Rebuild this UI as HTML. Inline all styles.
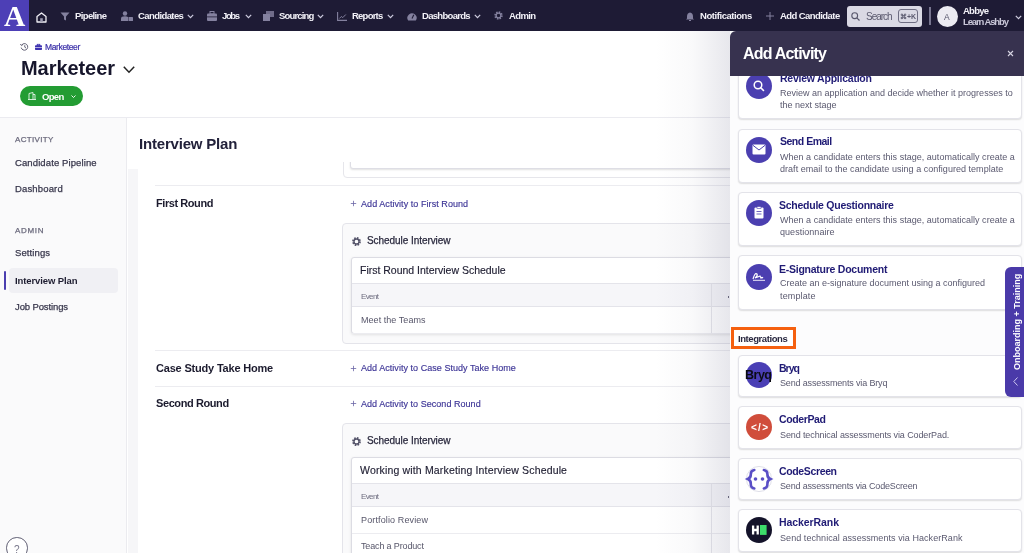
<!DOCTYPE html>
<html><head><meta charset="utf-8">
<style>
*{box-sizing:border-box;margin:0;padding:0}
html,body{width:1024px;height:553px;overflow:hidden;background:#fff;font-family:"Liberation Sans",sans-serif;color:#222}
.t{position:absolute;white-space:nowrap;line-height:1;will-change:transform}
.b{position:absolute}
svg{position:absolute;overflow:visible}
</style></head><body>
<div class="b" style="left:0;top:0;width:1024px;height:31px;background:#1e1b35"></div><div class="b" style="left:0;top:0;width:29px;height:31px;background:#4d3fb6"></div><div class="t" style="left:3.5px;top:1.83px;font-size:29.5px;color:#fff;font-weight:bold;font-family:'Liberation Serif',serif;">A</div>
<svg style="left:36px;top:12px" width="11" height="11" viewBox="0 0 11 11"><path d="M1 4.6 L5.5 1 L10 4.6 V10 H1 Z" fill="none" stroke="#f0eff5" stroke-width="1.3" stroke-linejoin="round"/><rect x="4.2" y="6.2" width="2.6" height="3.6" fill="#9c9ab0"/></svg><svg style="left:60px;top:12px" width="10" height="9" viewBox="0 0 10 9"><path d="M0.5 0.5 H9.5 L6 4.5 V8.5 L4 7.5 V4.5 Z" fill="#84819f"/></svg><div class="t" style="left:75.0px;top:10.96px;font-size:9.5px;color:#f3f2f8;font-weight:bold;letter-spacing:-0.63px;">Pipeline</div>
<svg style="left:121px;top:11px" width="12" height="10" viewBox="0 0 12 10"><circle cx="4" cy="2.5" r="2.2" fill="#84819f"/><path d="M0 10 V7.5 Q0 5.2 4 5.2 Q6 5.2 7 6 V10 Z" fill="#84819f"/><rect x="7.5" y="6" width="4.5" height="4" rx="0.6" fill="#84819f"/></svg><div class="t" style="left:137.7px;top:10.96px;font-size:9.5px;color:#f3f2f8;font-weight:bold;letter-spacing:-0.59px;">Candidates</div>
<svg style="left:187px;top:14px" width="7" height="5" viewBox="0 0 7 5"><path d="M0.8 0.8 L3.5 3.6 L6.2 0.8" fill="none" stroke="#cfcde0" stroke-width="1.2"/></svg><svg style="left:207px;top:11px" width="10" height="10" viewBox="0 0 10 10"><rect x="0" y="2.5" width="10" height="7.5" rx="1" fill="#84819f"/><rect x="3" y="0.5" width="4" height="2.5" fill="none" stroke="#84819f" stroke-width="1"/><rect x="0" y="5.5" width="10" height="0.8" fill="#1e1b35"/></svg><div class="t" style="left:221.5px;top:10.96px;font-size:9.5px;color:#f3f2f8;font-weight:bold;letter-spacing:-1.36px;">Jobs</div>
<svg style="left:245px;top:14px" width="7" height="5" viewBox="0 0 7 5"><path d="M0.8 0.8 L3.5 3.6 L6.2 0.8" fill="none" stroke="#cfcde0" stroke-width="1.2"/></svg><svg style="left:263px;top:11px" width="11" height="10" viewBox="0 0 11 10"><rect x="0" y="3" width="7" height="7" fill="#84819f"/><rect x="3" y="0" width="8" height="6" fill="#84819f" opacity=".8"/></svg><div class="t" style="left:279.0px;top:10.96px;font-size:9.5px;color:#f3f2f8;font-weight:bold;letter-spacing:-0.85px;">Sourcing</div>
<svg style="left:317px;top:14px" width="7" height="5" viewBox="0 0 7 5"><path d="M0.8 0.8 L3.5 3.6 L6.2 0.8" fill="none" stroke="#cfcde0" stroke-width="1.2"/></svg><svg style="left:336.5px;top:12px" width="10" height="9" viewBox="0 0 10 9"><path d="M0.6 0 V8.4 H10" fill="none" stroke="#84819f" stroke-width="1.1"/><path d="M2.3 6.5 L4.3 4.5 L5.8 5.6 L8.8 2.5" fill="none" stroke="#84819f" stroke-width="1"/></svg><div class="t" style="left:351.7px;top:10.96px;font-size:9.5px;color:#f3f2f8;font-weight:bold;letter-spacing:-0.77px;">Reports</div>
<svg style="left:386.5px;top:14px" width="7" height="5" viewBox="0 0 7 5"><path d="M0.8 0.8 L3.5 3.6 L6.2 0.8" fill="none" stroke="#cfcde0" stroke-width="1.2"/></svg><svg style="left:407px;top:12px" width="10" height="9" viewBox="0 0 10 9"><path d="M1.2 8.6 A4.6 4.6 0 1 1 8.8 8.6 Z" fill="#84819f"/><path d="M5 6.5 L6.8 2.8" stroke="#1e1b35" stroke-width="1.1"/></svg><div class="t" style="left:421.8px;top:10.96px;font-size:9.5px;color:#f3f2f8;font-weight:bold;letter-spacing:-0.70px;">Dashboards</div>
<svg style="left:474px;top:14px" width="7" height="5" viewBox="0 0 7 5"><path d="M0.8 0.8 L3.5 3.6 L6.2 0.8" fill="none" stroke="#cfcde0" stroke-width="1.2"/></svg><svg style="left:494px;top:11px" width="9" height="9" viewBox="0 0 10 10"><circle cx="5" cy="5" r="3.6" fill="none" stroke="#84819f" stroke-width="2.2" stroke-dasharray="1.6 1.2"/><circle cx="5" cy="5" r="2.6" fill="none" stroke="#84819f" stroke-width="1.4"/></svg><div class="t" style="left:508.5px;top:10.96px;font-size:9.5px;color:#f3f2f8;font-weight:bold;letter-spacing:-0.64px;">Admin</div>
<svg style="left:686px;top:12px" width="8" height="9" viewBox="0 0 8 9"><path d="M4 0.5 Q7 1 7 4.5 V6.5 L8 7.5 H0 L1 6.5 V4.5 Q1 1 4 0.5 Z" fill="#84819f"/><rect x="3" y="8" width="2" height="1" fill="#84819f"/></svg><div class="t" style="left:699.7px;top:10.96px;font-size:9.5px;color:#f3f2f8;font-weight:bold;letter-spacing:-0.44px;">Notifications</div>
<svg style="left:766px;top:12px" width="8" height="8" viewBox="0 0 8 8"><path d="M4 0 V8 M0 4 H8" stroke="#84819f" stroke-width="1"/></svg><div class="t" style="left:779.8px;top:10.96px;font-size:9.5px;color:#f3f2f8;font-weight:bold;letter-spacing:-0.57px;">Add Candidate</div>
<div class="b" style="left:847px;top:6px;width:75px;height:21px;background:#dad9e4;border-radius:3px"></div><svg style="left:851px;top:12px" width="9" height="9" viewBox="0 0 9 9"><circle cx="3.7" cy="3.7" r="2.9" fill="none" stroke="#57566b" stroke-width="1.1"/><path d="M5.8 5.8 L8.5 8.5" stroke="#57566b" stroke-width="1.2"/></svg><div class="t" style="left:865.5px;top:11.54px;font-size:10px;color:#5a596e;letter-spacing:-1.04px;">Search</div>
<div class="b" style="left:898px;top:9px;width:20px;height:14px;border:1px solid #6e6d82;border-radius:3px"></div><div class="t" style="left:899.8px;top:13.37px;font-size:7px;color:#5a596e;font-weight:bold;letter-spacing:-0.10px;">⌘+K</div>
<div class="b" style="left:929px;top:7px;width:2px;height:18px;background:#77758f"></div><div class="b" style="left:937px;top:6px;width:21px;height:21px;border-radius:50%;background:#ecebf2"></div><div class="t" style="left:944.0px;top:12.80px;font-size:8.5px;color:#55546a;">A</div>
<div class="t" style="left:963.0px;top:6.36px;font-size:9.5px;color:#f3f2f8;font-weight:bold;letter-spacing:-0.76px;">Abbye</div>
<div class="t" style="left:963.0px;top:17.16px;font-size:9.5px;color:#c9c7d8;font-weight:bold;letter-spacing:-1.12px;">Learn Ashby</div>
<svg style="left:1015px;top:15px" width="7" height="5" viewBox="0 0 7 5"><path d="M0.8 0.8 L3.5 3.6 L6.2 0.8" fill="none" stroke="#d0cee0" stroke-width="1.2"/></svg><svg style="left:20px;top:43px" width="9" height="8" viewBox="0 0 9 8"><path d="M1.6 2.2 A3.3 3.3 0 1 1 1.2 4.6" fill="none" stroke="#56556b" stroke-width="0.9"/><path d="M0.3 1 L1.6 2.6 L3 1.4" fill="none" stroke="#56556b" stroke-width="0.9"/><path d="M4.8 2.2 V4.2 L6 5" fill="none" stroke="#56556b" stroke-width="0.9"/></svg><svg style="left:35px;top:43.5px" width="7" height="6" viewBox="0 0 7 6"><rect x="0" y="1.3" width="7" height="4.7" rx="0.8" fill="#3d31b0"/><rect x="2.2" y="0.3" width="2.6" height="1.5" fill="none" stroke="#3d31b0" stroke-width="0.8"/><rect x="0" y="3.2" width="7" height="0.6" fill="#fff"/></svg><div class="t" style="left:45.3px;top:42.60px;font-size:8.5px;color:#3a2fa8;letter-spacing:-0.37px;-webkit-text-stroke:0.2px currentColor;">Marketeer</div>
<div class="t" style="left:21.0px;top:58.07px;font-size:20px;color:#17162c;font-weight:bold;letter-spacing:-0.06px;">Marketeer</div>
<svg style="left:123px;top:66px" width="12" height="8" viewBox="0 0 12 8"><path d="M0.8 0.8 L6 6.2 L11.2 0.8" fill="none" stroke="#222" stroke-width="1.5"/></svg><div class="b" style="left:20px;top:86px;width:63px;height:20px;border-radius:10px;background:#239c33"></div><svg style="left:28px;top:92px" width="8" height="8" viewBox="0 0 8 8"><path d="M1 7.5 V1.5 L5 0.5 V7.5 M0 7.5 H8 M5 2.5 H7 V7.5" fill="none" stroke="#e8f5ea" stroke-width="0.9"/></svg><div class="t" style="left:42.0px;top:92.36px;font-size:9.5px;color:#fff;font-weight:bold;letter-spacing:-0.66px;">Open</div>
<svg style="left:71px;top:95px" width="5" height="3" viewBox="0 0 5 3"><path d="M0.5 0.5 L2.5 2.5 L4.5 0.5" fill="none" stroke="#fff" stroke-width="0.9"/></svg><div class="b" style="left:0;top:117px;width:1024px;height:1px;background:#ebebf0"></div><div class="b" style="left:0;top:118px;width:127px;height:435px;background:#fafafb;border-right:1px solid #ebebef"></div><div class="t" style="left:15.2px;top:136.23px;font-size:8px;color:#6a697c;letter-spacing:0.33px;-webkit-text-stroke:0.25px currentColor;">ACTIVITY</div>
<div class="t" style="left:15.2px;top:157.96px;font-size:9.5px;color:#38374c;letter-spacing:0.11px;-webkit-text-stroke:0.25px currentColor;">Candidate Pipeline</div>
<div class="t" style="left:15.2px;top:184.36px;font-size:9.5px;color:#38374c;letter-spacing:0.15px;-webkit-text-stroke:0.25px currentColor;">Dashboard</div>
<div class="t" style="left:15.2px;top:227.43px;font-size:8px;color:#6a697c;letter-spacing:0.66px;-webkit-text-stroke:0.25px currentColor;">ADMIN</div>
<div class="t" style="left:15.2px;top:248.16px;font-size:9.5px;color:#38374c;letter-spacing:0.11px;-webkit-text-stroke:0.25px currentColor;">Settings</div>
<div class="b" style="left:9px;top:268px;width:109px;height:25px;background:#f0f0f4;border-radius:4px"></div><div class="b" style="left:4px;top:271px;width:2px;height:19px;background:#4b3fb0;border-radius:1px"></div><div class="t" style="left:15.2px;top:275.96px;font-size:9.5px;color:#1d1c30;font-weight:bold;letter-spacing:-0.10px;">Interview Plan</div>
<div class="t" style="left:15.2px;top:302.46px;font-size:9.5px;color:#38374c;letter-spacing:-0.12px;-webkit-text-stroke:0.25px currentColor;">Job Postings</div>
<div class="b" style="left:6px;top:537px;width:21.5px;height:21.5px;border-radius:50%;border:1.5px solid #5f5e73;background:#fff"></div><div class="t" style="left:13.8px;top:544.53px;font-size:10px;color:#77768a;">?</div>
<div class="b" style="left:128px;top:169px;width:10px;height:384px;background:#f6f6f8"></div><div class="b" style="left:343px;top:140px;width:420px;height:38px;border:1px solid #e6e6eb;border-radius:4px;background:#fff"></div><div class="b" style="left:350px;top:130px;width:400px;height:39px;border:1px solid #dedee5;border-radius:3px;background:#fff;box-shadow:0 1px 2px rgba(0,0,0,.12)"></div><div class="b" style="left:155px;top:185px;width:600px;height:1px;background:#ececf0"></div><div class="t" style="left:155.6px;top:197.69px;font-size:11px;color:#1c1b2e;font-weight:bold;letter-spacing:-0.43px;">First Round</div>
<svg style="left:350px;top:200.4px" width="7" height="7" viewBox="0 0 7 7"><path d="M3.5 0.8 V6.2 M0.8 3.5 H6.2" stroke="#6b66a6" stroke-width="0.8"/></svg><div class="t" style="left:361.0px;top:199.78px;font-size:9px;color:#3d3596;letter-spacing:0.06px;-webkit-text-stroke:0.15px currentColor;">Add Activity to First Round</div>
<div class="b" style="left:342px;top:223px;width:430px;height:120.5px;border:1px solid #e4e4ea;border-radius:4px;background:#fafafb"></div><svg style="left:351.5px;top:236.5px" width="9" height="9" viewBox="0 0 10 10"><circle cx="5" cy="5" r="3.7" fill="none" stroke="#55546a" stroke-width="2.4" stroke-dasharray="1.7 1.2"/><circle cx="5" cy="5" r="2.8" fill="none" stroke="#55546a" stroke-width="1.5"/></svg><div class="t" style="left:366.6px;top:235.53px;font-size:10px;color:#2a293e;letter-spacing:-0.06px;-webkit-text-stroke:0.25px currentColor;">Schedule Interview</div>
<div class="b" style="left:351px;top:257px;width:420px;height:77px;border:1px solid #dcdce3;border-radius:3px;background:#fff;box-shadow:0 1px 3px rgba(0,0,0,.10)"></div><div class="t" style="left:359.5px;top:265.11px;font-size:10.5px;color:#1e1d31;letter-spacing:-0.01px;-webkit-text-stroke:0.15px currentColor;">First Round Interview Schedule</div>
<div class="b" style="left:352px;top:283px;width:418px;height:24px;background:#f6f6f9;border-top:1px solid #e4e4ea;border-bottom:1px solid #e4e4ea"></div><div class="b" style="left:711px;top:284px;width:1px;height:23px;background:#e6e6eb"></div><div class="b" style="left:727.5px;top:295.5px;width:1.5px;height:2px;background:#6a697c"></div><div class="t" style="left:361.0px;top:292.53px;font-size:8px;color:#6c6b7e;letter-spacing:-0.61px;">Event</div>
<div class="t" style="left:361.0px;top:315.88px;font-size:9px;color:#57566a;letter-spacing:0.05px;">Meet the Teams</div>
<div class="b" style="left:711px;top:307px;width:1px;height:26px;background:#e6e6eb"></div><div class="b" style="left:352px;top:333px;width:418px;height:1px;background:#ececf0"></div><div class="b" style="left:155px;top:350px;width:600px;height:1px;background:#ececf0"></div><div class="t" style="left:155.6px;top:362.69px;font-size:11px;color:#1c1b2e;font-weight:bold;letter-spacing:-0.19px;">Case Study Take Home</div>
<svg style="left:350px;top:365px" width="7" height="7" viewBox="0 0 7 7"><path d="M3.5 0.8 V6.2 M0.8 3.5 H6.2" stroke="#6b66a6" stroke-width="0.8"/></svg><div class="t" style="left:361.0px;top:364.38px;font-size:9px;color:#3d3596;letter-spacing:0.04px;-webkit-text-stroke:0.15px currentColor;">Add Activity to Case Study Take Home</div>
<div class="b" style="left:155px;top:386px;width:600px;height:1px;background:#ececf0"></div><div class="t" style="left:155.6px;top:397.89px;font-size:11px;color:#1c1b2e;font-weight:bold;letter-spacing:-0.41px;">Second Round</div>
<svg style="left:350px;top:400.2px" width="7" height="7" viewBox="0 0 7 7"><path d="M3.5 0.8 V6.2 M0.8 3.5 H6.2" stroke="#6b66a6" stroke-width="0.8"/></svg><div class="t" style="left:361.0px;top:399.58px;font-size:9px;color:#3d3596;letter-spacing:0.04px;-webkit-text-stroke:0.15px currentColor;">Add Activity to Second Round</div>
<div class="b" style="left:342px;top:423px;width:430px;height:200px;border:1px solid #e4e4ea;border-radius:4px;background:#fafafb"></div><svg style="left:351.5px;top:436.5px" width="9" height="9" viewBox="0 0 10 10"><circle cx="5" cy="5" r="3.7" fill="none" stroke="#55546a" stroke-width="2.4" stroke-dasharray="1.7 1.2"/><circle cx="5" cy="5" r="2.8" fill="none" stroke="#55546a" stroke-width="1.5"/></svg><div class="t" style="left:366.6px;top:435.54px;font-size:10px;color:#2a293e;letter-spacing:-0.06px;-webkit-text-stroke:0.25px currentColor;">Schedule Interview</div>
<div class="b" style="left:351px;top:457px;width:420px;height:200px;border:1px solid #dcdce3;border-radius:3px;background:#fff;box-shadow:0 1px 3px rgba(0,0,0,.10)"></div><div class="t" style="left:359.5px;top:465.11px;font-size:10.5px;color:#1e1d31;letter-spacing:0.16px;-webkit-text-stroke:0.15px currentColor;">Working with Marketing Interview Schedule</div>
<div class="b" style="left:352px;top:483px;width:418px;height:24px;background:#f6f6f9;border-top:1px solid #e4e4ea;border-bottom:1px solid #e4e4ea"></div><div class="b" style="left:711px;top:484px;width:1px;height:23px;background:#e6e6eb"></div><div class="b" style="left:727.5px;top:495.5px;width:1.5px;height:2px;background:#6a697c"></div><div class="t" style="left:361.0px;top:492.53px;font-size:8px;color:#6c6b7e;letter-spacing:-0.61px;">Event</div>
<div class="t" style="left:361.0px;top:515.88px;font-size:9px;color:#57566a;letter-spacing:0.13px;">Portfolio Review</div>
<div class="b" style="left:711px;top:507px;width:1px;height:26px;background:#e6e6eb"></div><div class="b" style="left:352px;top:533px;width:418px;height:1px;background:#ececf0"></div><div class="t" style="left:361.0px;top:541.88px;font-size:9px;color:#57566a;letter-spacing:-0.15px;">Teach a Product</div>
<div class="b" style="left:711px;top:533px;width:1px;height:26px;background:#e6e6eb"></div><div class="b" style="left:352px;top:559px;width:418px;height:1px;background:#ececf0"></div><div class="b" style="left:128px;top:118px;width:603px;height:44px;background:#fff"></div><div class="t" style="left:139.2px;top:136.30px;font-size:15px;color:#22213a;font-weight:bold;letter-spacing:-0.19px;">Interview Plan</div>
<div class="b" style="left:655px;top:31px;width:75px;height:522px;background:linear-gradient(to right,rgba(70,70,110,0) 0%,rgba(70,70,110,.03) 50%,rgba(70,70,110,.13) 100%)"></div><div class="b" style="left:730px;top:31px;width:294px;height:522px;background:#fcfcfd"></div><div class="b" style="left:737.5px;top:60px;width:284px;height:59px;background:#fff;border:1px solid #e3e3e9;border-radius:4px;box-shadow:0 1px 1.5px rgba(0,0,0,.12)"></div><div class="b" style="left:746px;top:73px;width:26px;height:26px;border-radius:50%;background:#4b3fb0;"></div><svg style="left:752px;top:79px" width="14" height="14" viewBox="0 0 14 14"><circle cx="6" cy="6" r="3.8" fill="none" stroke="#fff" stroke-width="1.5"/><path d="M8.7 8.7 L11.5 11.5" stroke="#fff" stroke-width="1.6" stroke-linecap="round"/></svg><div class="t" style="left:780.0px;top:72.81px;font-size:10.5px;color:#1f1a74;font-weight:bold;letter-spacing:-0.23px;">Review Application</div>
<div class="t" style="left:779.5px;top:89.28px;font-size:9px;color:#5a596f;">Review an application and decide whether it progresses to</div>
<div class="t" style="left:779.5px;top:100.98px;font-size:9px;color:#5a596f;">the next stage</div>
<div class="b" style="left:737.5px;top:128.5px;width:284px;height:54.5px;background:#fff;border:1px solid #e3e3e9;border-radius:4px;box-shadow:0 1px 1.5px rgba(0,0,0,.12)"></div><div class="b" style="left:746px;top:136.5px;width:26px;height:26px;border-radius:50%;background:#4b3fb0;"></div><svg style="left:752px;top:144px" width="14" height="11" viewBox="0 0 14 11"><rect x="0.5" y="0.5" width="13" height="10" rx="1" fill="#fff"/><path d="M0.8 1.2 L7 6 L13.2 1.2" fill="none" stroke="#4b3fb0" stroke-width="1"/></svg><div class="t" style="left:779.8px;top:136.31px;font-size:10.5px;color:#1f1a74;font-weight:bold;letter-spacing:-0.49px;">Send Email</div>
<div class="t" style="left:779.5px;top:153.18px;font-size:9px;color:#5a596f;letter-spacing:0.02px;">When a candidate enters this stage, automatically create a</div>
<div class="t" style="left:779.5px;top:165.38px;font-size:9px;color:#5a596f;letter-spacing:0.03px;">draft email to the candidate using a configured template</div>
<div class="b" style="left:737.5px;top:192px;width:284px;height:54px;background:#fff;border:1px solid #e3e3e9;border-radius:4px;box-shadow:0 1px 1.5px rgba(0,0,0,.12)"></div><div class="b" style="left:746px;top:200px;width:26px;height:26px;border-radius:50%;background:#4b3fb0;"></div><svg style="left:754px;top:206px" width="10" height="13" viewBox="0 0 10 13"><rect x="0.5" y="1.5" width="9" height="11" rx="1" fill="#fff"/><rect x="3" y="0.5" width="4" height="2" fill="#fff" stroke="#4b3fb0" stroke-width="0.6"/><path d="M2.5 5.5 H7.5 M2.5 8 H7.5" stroke="#4b3fb0" stroke-width="0.8"/></svg><div class="t" style="left:779.3px;top:200.31px;font-size:10.5px;color:#1f1a74;font-weight:bold;letter-spacing:-0.25px;">Schedule Questionnaire</div>
<div class="t" style="left:779.5px;top:216.38px;font-size:9px;color:#5a596f;letter-spacing:0.02px;">When a candidate enters this stage, automatically create a</div>
<div class="t" style="left:779.5px;top:228.08px;font-size:9px;color:#5a596f;letter-spacing:0.04px;">questionnaire</div>
<div class="b" style="left:737.5px;top:255px;width:284px;height:54.5px;background:#fff;border:1px solid #e3e3e9;border-radius:4px;box-shadow:0 1px 1.5px rgba(0,0,0,.12)"></div><div class="b" style="left:746px;top:263.5px;width:26px;height:26px;border-radius:50%;background:#4b3fb0;"></div><svg style="left:752px;top:271px" width="14" height="10" viewBox="0 0 14 10"><path d="M1 8 Q3 1 5 3 Q6 5 3 7 Q6 6 8 5 L9 7 Q10 6 11 7" fill="none" stroke="#fff" stroke-width="1.2"/><path d="M1 9.3 H13" stroke="#fff" stroke-width="0.9"/></svg><div class="t" style="left:779.3px;top:263.91px;font-size:10.5px;color:#1f1a74;font-weight:bold;letter-spacing:-0.25px;">E-Signature Document</div>
<div class="t" style="left:779.5px;top:279.38px;font-size:9px;color:#5a596f;">Create an e-signature document using a configured</div>
<div class="t" style="left:779.5px;top:291.68px;font-size:9px;color:#5a596f;letter-spacing:0.14px;">template</div>
<div class="b" style="left:731px;top:327px;width:65px;height:22px;border:3px solid #f5600f;background:#fff"></div><div class="t" style="left:737.7px;top:334.26px;font-size:9.5px;color:#2a2940;font-weight:bold;letter-spacing:-0.42px;">Integrations</div>
<div class="b" style="left:737.5px;top:354.5px;width:284px;height:42.5px;background:#fff;border:1px solid #e3e3e9;border-radius:4px;box-shadow:0 1px 1.5px rgba(0,0,0,.12)"></div><div class="b" style="left:746px;top:362.3px;width:26px;height:26px;border-radius:50%;background:#4a3fb5;"></div><div class="t" style="left:744.5px;top:368.92px;font-size:12.5px;color:#0b0b14;font-weight:bold;letter-spacing:-0.5px;">Bryq</div>
<div class="t" style="left:779.0px;top:362.61px;font-size:10.5px;color:#1f1a74;font-weight:bold;letter-spacing:-0.97px;">Bryq</div>
<div class="t" style="left:779.5px;top:379.18px;font-size:9px;color:#5a596f;letter-spacing:-0.15px;">Send assessments via Bryq</div>
<div class="b" style="left:737.5px;top:406.3px;width:284px;height:42.5px;background:#fff;border:1px solid #e3e3e9;border-radius:4px;box-shadow:0 1px 1.5px rgba(0,0,0,.12)"></div><div class="b" style="left:746px;top:414.3px;width:26px;height:26px;border-radius:50%;background:#d04d3b;"></div><div class="t" style="left:750.5px;top:423.04px;font-size:10px;color:#fff;font-weight:bold;letter-spacing:1.27px;">&lt;/&gt;</div>
<div class="t" style="left:779.0px;top:414.41px;font-size:10.5px;color:#1f1a74;font-weight:bold;letter-spacing:-0.37px;">CoderPad</div>
<div class="t" style="left:779.5px;top:430.98px;font-size:9px;color:#5a596f;letter-spacing:-0.11px;">Send technical assessments via CoderPad.</div>
<div class="b" style="left:737.5px;top:457.7px;width:284px;height:42.5px;background:#fff;border:1px solid #e3e3e9;border-radius:4px;box-shadow:0 1px 1.5px rgba(0,0,0,.12)"></div><svg style="left:746px;top:465.5px" width="26" height="26" viewBox="0 0 26 26"><circle cx="13" cy="13" r="12.6" fill="#fff" stroke="#dddde6" stroke-width="0.9"/><path d="M8.3 4 Q4.6 4.6 4.8 8.2 Q5 11.6 1.9 13 Q5 14.4 4.8 17.8 Q4.6 21.6 8.3 22.4" fill="none" stroke="#5a4fc6" stroke-width="2.6" stroke-linecap="round"/><path d="M17.9 4 Q21.6 4.6 21.4 8.2 Q21.2 11.6 24.3 13 Q21.2 14.4 21.4 17.8 Q21.6 21.6 17.9 22.4" fill="none" stroke="#5a4fc6" stroke-width="2.6" stroke-linecap="round"/><circle cx="9.5" cy="13" r="1.8" fill="#5a4fc6"/><circle cx="16.5" cy="13" r="1.8" fill="#5a4fc6"/></svg><div class="t" style="left:779.0px;top:465.81px;font-size:10.5px;color:#1f1a74;font-weight:bold;letter-spacing:-0.36px;">CodeScreen</div>
<div class="t" style="left:779.5px;top:482.38px;font-size:9px;color:#5a596f;letter-spacing:-0.17px;">Send assessments via CodeScreen</div>
<div class="b" style="left:737.5px;top:509px;width:284px;height:42.5px;background:#fff;border:1px solid #e3e3e9;border-radius:4px;box-shadow:0 1px 1.5px rgba(0,0,0,.12)"></div><svg style="left:746px;top:517px" width="26" height="26" viewBox="0 0 26 26"><circle cx="13" cy="13" r="13" fill="#14132a"/><path d="M7.1 8.6 V17.6 M11.7 8.6 V17.6 M7.1 13 H11.7" stroke="#fff" stroke-width="2.3"/><rect x="14" y="8" width="6.6" height="9.9" fill="#3ddc6b"/></svg><div class="t" style="left:779.0px;top:517.11px;font-size:10.5px;color:#1f1a74;font-weight:bold;letter-spacing:-0.08px;">HackerRank</div>
<div class="t" style="left:779.5px;top:533.68px;font-size:9px;color:#5a596f;letter-spacing:0.06px;">Send technical assessments via HackerRank</div>
<div class="b" style="left:730px;top:31px;width:294px;height:44.5px;background:#37324f;border-top-left-radius:6px"></div><div class="t" style="left:742.5px;top:46.36px;font-size:16px;color:#fff;font-weight:bold;letter-spacing:-0.80px;">Add Activity</div>
<svg style="left:1007px;top:50px" width="7" height="7" viewBox="0 0 7 7"><path d="M1 1 L6 6 M6 1 L1 6" stroke="#d6d4e2" stroke-width="1.1"/></svg><div class="b" style="left:1005px;top:267px;width:22px;height:130px;background:#4a3aa9;border-radius:6px 0 0 6px"></div><div class="t" style="left:1012.5px;top:370px;font-size:9px;font-weight:bold;color:#fff;transform-origin:0 0;transform:rotate(-90deg);">Onboarding + Training</div><svg style="left:1013px;top:377px" width="5" height="9" viewBox="0 0 5 9"><path d="M4.5 0.5 L0.8 4.5 L4.5 8.5" fill="none" stroke="#cfc9f0" stroke-width="1"/></svg></body></html>
